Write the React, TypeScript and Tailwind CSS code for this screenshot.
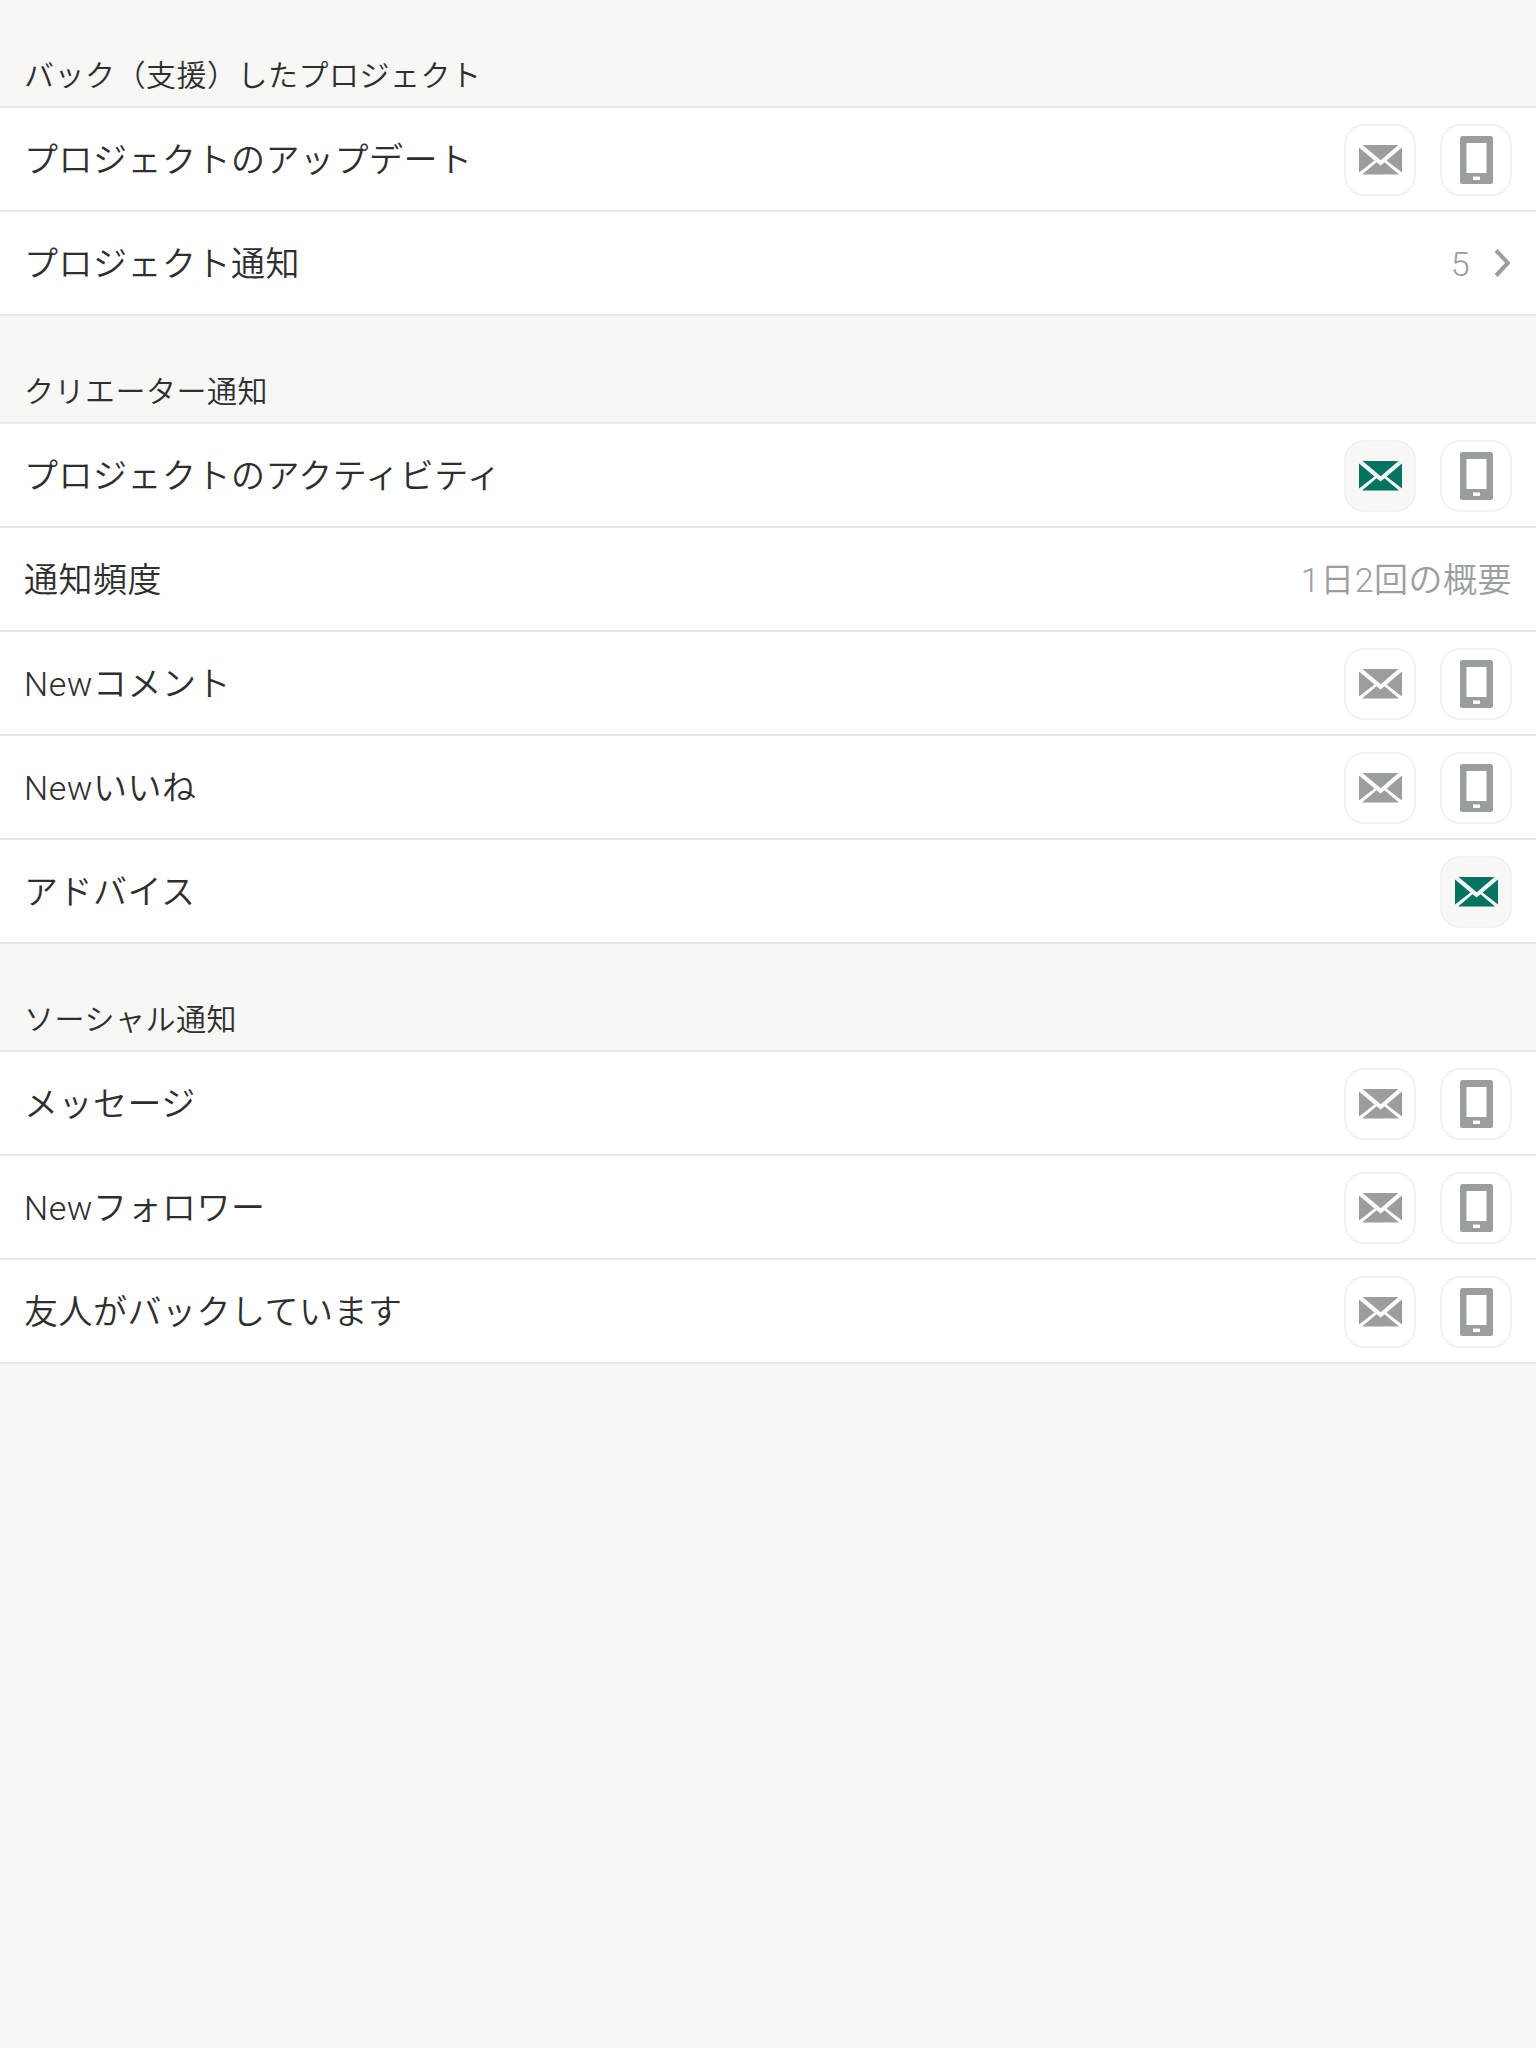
const MailIcon = ({ active }: { active?: boolean }) => (
  <svg width="44" height="30" viewBox="-1 0 44 30" className={active ? "text-[#037362]" : "text-[#9b9e9e]"}>
    <path fill="currentColor" d="M0 2.500 15.500 15.500 0 27.500Z" />
    <path fill="currentColor" d="M43 2.500 27.500 15.500 43 27.500Z" />
    <path fill="currentColor" d="M3.500 0H39.500L22 15 21.500 15Z" />
    <path fill="currentColor" d="M17.500 17.200 21.500 20.500 25.500 17.200 40 29.500H3Z" />
  </svg>
)

const PhoneIcon = () => (
  <svg width="33" height="48" viewBox="0 0 33 48" className="text-[#9b9e9e]">
    <path
      fill="currentColor"
      fillRule="evenodd"
      d="M2.500 0h28A2.500 2.500 0 0 1 33 2.500v43a2.500 2.500 0 0 1-2.500 2.500h-28A2.500 2.500 0 0 1 0 45.500v-43A2.500 2.500 0 0 1 2.500 0ZM6.500 7v30h20V7ZM13 40.500v3.500h7v-3.500Z"
    />
  </svg>
)

const IconButton = ({ active, children }: { active?: boolean; children: React.ReactNode }) => (
  <div
    className={`flex h-[72px] w-[72px] items-center justify-center rounded-[20px] border-2 border-[#f2f2f0] ${
      active ? "bg-[#f7f7f6]" : "bg-white"
    }`}
  >
    {children}
  </div>
)

type Row = {
  label: string
  mail?: "on" | "off"
  phone?: boolean
  value?: string
  chevron?: boolean
}

const sections: { title: string; rows: Row[] }[] = [
  {
    title: "バック（支援）したプロジェクト",
    rows: [
      { label: "プロジェクトのアップデート", mail: "off", phone: true },
      { label: "プロジェクト通知", value: "5", chevron: true },
    ],
  },
  {
    title: "クリエーター通知",
    rows: [
      { label: "プロジェクトのアクティビティ", mail: "on", phone: true },
      { label: "通知頻度", value: "1日2回の概要" },
      { label: "Newコメント", mail: "off", phone: true },
      { label: "Newいいね", mail: "off", phone: true },
      { label: "アドバイス", mail: "on" },
    ],
  },
  {
    title: "ソーシャル通知",
    rows: [
      { label: "メッセージ", mail: "off", phone: true },
      { label: "Newフォロワー", mail: "off", phone: true },
      { label: "友人がバックしています", mail: "off", phone: true },
    ],
  },
]

export default function App() {
  return (
    <div className="min-h-[2048px] bg-[#f7f7f6] font-['Roboto','Noto_Sans_CJK_JP',sans-serif] font-[350] text-[#2e2e2e]">
      {sections.map((section) => (
        <section key={section.title}>
          <div className="flex h-[106px] items-end px-6 pb-[8px]">
            <h2 className="text-[30px] leading-[44px] font-[350] tracking-[0.5px]">{section.title}</h2>
          </div>
          <div className="border-t-2 border-[#e9e9e8] bg-white">
            {section.rows.map((row) => (
              <div
                key={row.label}
                className="flex h-[104px] items-center justify-between border-b-2 border-[#e9e9e8] px-6 pt-[2px]"
              >
                <span className="text-[34px] leading-[48px] tracking-[0.5px]">{row.label}</span>
                <div className="flex items-center gap-6">
                  {row.value && (
                    <span className="text-[34px] leading-[48px] tracking-[0.5px] text-[#9b9e9e]">{row.value}</span>
                  )}
                  {row.chevron && (
                    <svg width="16" height="28" viewBox="0 0 16 28" className="mr-0.5 -mt-[2px] text-[#9b9e9e]">
                      <path d="M2 1.500 14 14 2 26.500" fill="none" stroke="currentColor" strokeWidth="4" />
                    </svg>
                  )}
                  {row.mail && (
                    <IconButton active={row.mail === "on"}>
                      <MailIcon active={row.mail === "on"} />
                    </IconButton>
                  )}
                  {row.phone && (
                    <IconButton>
                      <PhoneIcon />
                    </IconButton>
                  )}
                </div>
              </div>
            ))}
          </div>
        </section>
      ))}
    </div>
  )
}
